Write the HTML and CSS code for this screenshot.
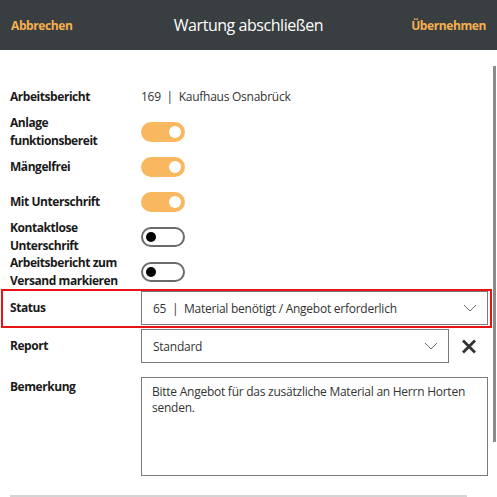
FILE: index.html
```
<html>
    <head>
        <meta charset="utf-8">
        <link rel="stylesheet" href="styles.css">
    </head>
    <body>
        <div class="topBar">
            <a class="topAction">Abbrechen</a>
            <div class="topTitle">Wartung abschließen</div>
            <a class="topAction topActionRight">Übernehmen</a>
        </div>

        <div class="formBody">
            <div class="formRow">
                <div class="formLabel">Arbeitsbericht</div>
                <div class="formValue">169&nbsp; |&nbsp; Kaufhaus Osnabrück</div>
            </div>
            <div class="formRow">
                <div class="formLabel">Anlage<br>funktionsbereit</div>
                <div class="toggle toggleOn"><span class="knob"></span></div>
            </div>
            <div class="formRow">
                <div class="formLabel">Mängelfrei</div>
                <div class="toggle toggleOn"><span class="knob"></span></div>
            </div>
            <div class="formRow">
                <div class="formLabel">Mit Unterschrift</div>
                <div class="toggle toggleOn"><span class="knob"></span></div>
            </div>
            <div class="formRow">
                <div class="formLabel">Kontaktlose<br>Unterschrift</div>
                <div class="toggle toggleOff"><span class="knob"></span></div>
            </div>
            <div class="formRow">
                <div class="formLabel">Arbeitsbericht zum<br>Versand markieren</div>
                <div class="toggle toggleOff"><span class="knob"></span></div>
            </div>

            <div class="formRow statusRow">
                <div class="formLabel">Status</div>
                <div class="selectBox">
                    <span>65&nbsp; |&nbsp; Material benötigt / Angebot erforderlich</span>
                    <svg class="chevron" width="14" height="8" viewBox="0 0 14 8"><path d="M1 1 L7 7 L13 1" fill="none" stroke="#6e6e6e" stroke-width="1"/></svg>
                </div>
            </div>

            <div class="formRow reportRow">
                <div class="formLabel">Report</div>
                <div class="selectBox reportSelect">
                    <span>Standard</span>
                    <svg class="chevron" width="14" height="8" viewBox="0 0 14 8"><path d="M1 1 L7 7 L13 1" fill="none" stroke="#6e6e6e" stroke-width="1"/></svg>
                </div>
                <svg class="clearIcon" width="16" height="15" viewBox="0 0 16 15"><path d="M2 1.5 L14 13.5 M14 1.5 L2 13.5" stroke="#333" stroke-width="2.8"/></svg>
            </div>

            <div class="formRow remarkRow">
                <div class="formLabel">Bemerkung</div>
                <div class="remarkBox">Bitte Angebot für das zusätzliche Material an Herrn Horten senden.</div>
            </div>

            <div class="bottomRule"></div>
        </div>

        <div class="scrollThumb"></div>
    </body>
</html>
```

FILE: styles.css
```
body {
  margin: 0;
  font-family: "Open Sans", "Noto Sans", sans-serif;
  color: #222;
  background: #ffffff;
  overflow: hidden;
}

/* header */
.topBar {
  height: 50px;
  background: #393e40;
  display: grid;
  grid-template-columns: 1fr auto 1fr;
  align-items: center;
  padding: 0 11px;
}
.topAction {
  color: #f6b04f;
  font-weight: bold;
  font-size: 12px;
  letter-spacing: -0.4px;
}
.topActionRight {
  justify-self: end;
}
.topTitle {
  color: #ffffff;
  font-size: 16px;
  letter-spacing: -0.45px;
}

/* form */
.formBody {
  padding: 29px 0 0 10px;
}
.formRow {
  display: flex;
  align-items: center;
  height: 35px;
}
.formLabel {
  width: 131px;
  flex-shrink: 0;
  font-size: 12px;
  font-weight: bold;
  line-height: 18px;
  letter-spacing: -0.45px;
  color: #1a1a1a;
}
.formValue {
  font-size: 12px;
  letter-spacing: -0.25px;
  color: #333;
}

/* toggles */
.toggle {
  width: 44px;
  height: 20px;
  border-radius: 10px;
  box-sizing: border-box;
  display: flex;
  align-items: center;
}
.toggleOn {
  background: #f9b860;
  justify-content: flex-end;
  padding-right: 4px;
}
.toggleOn .knob {
  width: 12px;
  height: 12px;
  border-radius: 50%;
  background: #ffffff;
}
.toggleOff {
  border: 2px solid #6b6b6b;
  background: #ffffff;
  padding-left: 3px;
}
.toggleOff .knob {
  width: 10px;
  height: 10px;
  border-radius: 50%;
  background: #000000;
}

/* selects */
.statusRow {
  height: auto;
  margin: 0 5px 0 -9px;
  border: 2px solid #e81414;
  padding: 0 2px 1px 7px;
}
.selectBox {
  flex: 1;
  height: 34px;
  box-sizing: border-box;
  border: 1px solid #7a7a7a;
  display: flex;
  align-items: center;
  justify-content: space-between;
  padding: 0 10px 0 11px;
  font-size: 12px;
  letter-spacing: -0.25px;
  color: #333;
}
.reportRow {
  height: 34px;
  margin-top: 1px;
}
.reportSelect {
  flex: 0 0 308px;
}
.clearIcon {
  margin-left: 12px;
}

/* remark */
.remarkRow {
  height: auto;
  align-items: flex-start;
  margin-top: 14px;
}
.remarkRow .formLabel {
  margin-top: 1px;
}
.remarkBox {
  width: 347px;
  height: 99px;
  box-sizing: border-box;
  border: 1px solid #7a7a7a;
  padding: 6px 10px;
  font-size: 12px;
  line-height: 16px;
  letter-spacing: -0.25px;
  color: #333;
}

.bottomRule {
  margin-top: 19px;
  width: 457px;
  border-top: 2px solid #d4d4d4;
}

/* scrollbar overlay */
.scrollThumb {
  position: absolute;
  right: 1px;
  top: 66px;
  width: 3px;
  height: 376px;
  background: #8a8a8a;
}
```
